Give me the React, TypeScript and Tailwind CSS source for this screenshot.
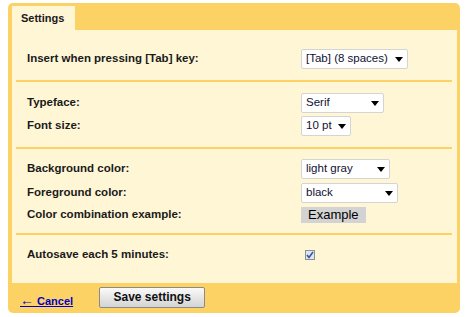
import React from "react";

const font = { fontFamily: '"Liberation Sans", Arial, sans-serif' };

function Select({ value, width }: { value: string; width: number }) {
  return (
    <div
      className="flex items-center justify-between h-[20px] bg-white border border-[#d4d4d4] rounded-[2px] pl-[4px] pr-[4px] text-[11.5px] text-[#111133]"
      style={{ width }}
    >
      <span>{value}</span>
      <svg width="8" height="5" viewBox="0 0 8 5">
        <path d="M0 0 L8 0 L4 5 Z" fill="#000" />
      </svg>
    </div>
  );
}

function Row({ label, children, h = 20 }: { label: string; children: React.ReactNode; h?: number }) {
  return (
    <div className="flex items-center" style={{ height: h }}>
      <div className="w-[289px] pl-[15px] text-[11.5px] font-bold text-[#1a1a1a]">{label}</div>
      <div>{children}</div>
    </div>
  );
}

function Divider() {
  return <div className="h-[2px] bg-[#fcd265] ml-[4px] mr-[5px]" />;
}

export default function App() {
  return (
    <div className="w-[467px] h-[317px] bg-white pt-[3px] pl-[8px]" style={font}>
      <div className="w-[452px] h-[310px] bg-[#fcd265] rounded-[5px] pt-[3px] pl-[4px] pr-[3px] flex flex-col">
        <div className="w-[63px] h-[24px] bg-[#fff6d6] pl-[9px] flex items-center text-[11px] font-bold text-[#1a1a1a]">
          Settings
        </div>
        <div className="h-[253px] bg-[#fff6d6] flex flex-col">
          <div className="pt-[19px] pb-[11px]">
            <Row label="Insert when pressing [Tab] key:">
              <Select value="[Tab] (8 spaces)" width={107} />
            </Row>
          </div>
          <Divider />
          <div className="pt-[11px] pb-[11px] flex flex-col gap-[3px]">
            <Row label="Typeface:">
              <Select value="Serif" width={83} />
            </Row>
            <Row label="Font size:">
              <Select value="10 pt" width={50} />
            </Row>
          </div>
          <Divider />
          <div className="pt-[10px] pb-[10px] flex flex-col gap-[4px]">
            <Row label="Background color:">
              <Select value="light gray" width={89} />
            </Row>
            <Row label="Foreground color:">
              <Select value="black" width={97} />
            </Row>
            <Row label="Color combination example:" h={16}>
              <div className="w-[65px] h-[16px] bg-[#d3d3d3] pl-[7px] text-[13px] leading-[16px] text-black">
                Example
              </div>
            </Row>
          </div>
          <Divider />
          <div className="pt-[13px]">
            <Row label="Autosave each 5 minutes:" h={14}>
              <div className="ml-[4px] w-[10px] h-[10px] border border-[#8f8f8f] bg-[#dfe6f0] flex items-center justify-center">
                <svg width="8" height="8" viewBox="0 0 8 8">
                  <path d="M1 4 L3 6.5 L7 1" stroke="#3355aa" strokeWidth="1.6" fill="none" />
                </svg>
              </div>
            </Row>
          </div>
        </div>
        <div className="flex items-center h-[30px]">
          <a href="#" className="ml-[8px] mt-[6px] text-[11px] font-bold text-[#0000cc] underline">
            <span className="text-[14px] leading-[11px]">←</span>&nbsp;Cancel
          </a>
          <button className="ml-[26px] mb-[2px] w-[106px] h-[21px] border border-[#8a8a8a] rounded-[2px] bg-gradient-to-b from-[#fafafa] to-[#d4d4d4] text-[12px] font-bold text-[#111]">
            Save settings
          </button>
        </div>
      </div>
    </div>
  );
}
